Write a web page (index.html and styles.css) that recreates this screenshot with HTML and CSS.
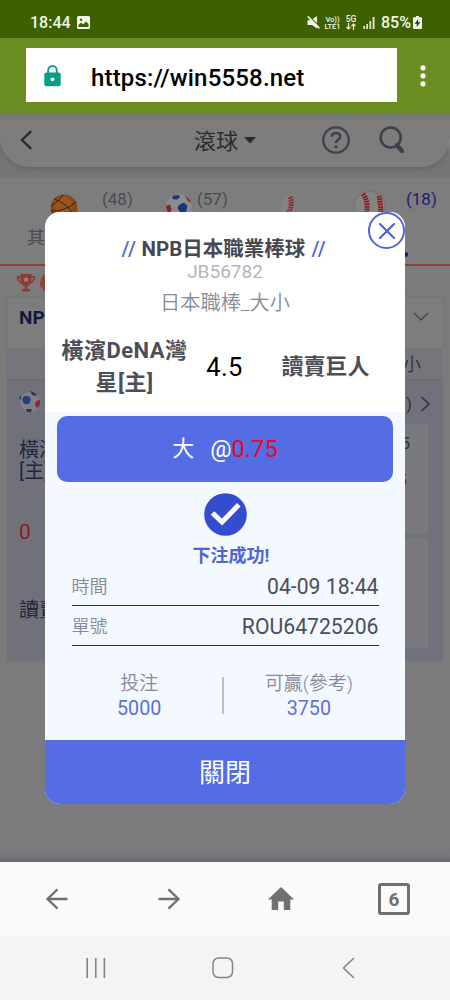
FILE: index.html
```html
<!DOCTYPE html>
<html lang="zh-Hant">
<head>
<meta charset="utf-8">
<title>滾球</title>
<link rel="stylesheet" href="styles.css">
</head>
<body>
<div class="phone">
  <header class="status">
    <span class="clock">18:44</span>
    <svg class="photo" width="13" height="13" viewBox="0 0 13 13"><rect width="13" height="13" rx="1.5" fill="#f2f5e6"/><path d="M1.5 11 V9 L4 6.5 L6 8.5 L9 5.5 L11.5 8 V11Z" fill="#3d6100"/><circle cx="4" cy="3.8" r="1.2" fill="#3d6100"/></svg>
    <span class="grow"></span>
    <svg class="mute" width="13" height="13" viewBox="0 0 13 13"><path d="M.5 4.3H4L10 0V12.5L5 9H.5Z" fill="#f2f5e6"/><path d="M2 0L13 11" stroke="#3d6100" stroke-width="1.2"/><path d="M.8 .4L12.4 12.4" stroke="#f2f5e6" stroke-width="1.6"/></svg>
    <span class="tiny volte"><span>Vo))</span><span>LTE1</span></span>
    <span class="tiny fiveg"><span>5G</span><svg width="10" height="7" viewBox="0 0 10 7"><path d="M2.5 0V6M.5 4L2.5 6L4.5 4M7.5 7V1M5.5 3L7.5 1L9.5 3" fill="none" stroke="#f2f5e6" stroke-width="1.2"/></svg></span>
    <svg class="signal" width="12" height="12" viewBox="0 0 12 12"><path d="M.3 9H2V12H.3ZM3.3 7H5V12H3.3ZM6.4 4H8.1V12H6.4ZM9.6 0H11.5V12H9.6Z" fill="#dfe6cf"/></svg>
    <span class="battery-text">85%</span>
    <svg class="battery" width="9" height="13" viewBox="0 0 9 13"><path d="M3 0H6V1.3H8Q9 1.3 9 2.3V12Q9 13 8 13H1Q0 13 0 12V2.3Q0 1.3 1 1.3H3Z" fill="#f2f5e6"/><path d="M5.3 3L1.6 7.7H4L3.4 11L7.4 6.2H5Z" fill="#213600"/></svg>
  </header>

  <div class="toolbar">
    <div class="address">
      <svg class="lock" width="17" height="22" viewBox="0 0 17 22"><path d="M4.2 9V5.3A4.2 4.2 0 0 1 12.8 5.3V9" fill="none" stroke="#0b9c86" stroke-width="1.9"/><rect x=".3" y="7.5" width="16.4" height="13.7" rx="2" fill="#0b9c86"/><circle cx="8.5" cy="14.3" r="1.9" fill="#fff"/></svg>
      <span class="url">https://win5558.net</span>
    </div>
    <svg class="dots" width="6" height="22" viewBox="0 0 6 22"><g fill="#fff"><circle cx="3" cy="2.8" r="2.6"/><circle cx="3" cy="10.8" r="2.6"/><circle cx="3" cy="18.8" r="2.6"/></g></svg>
  </div>

  <main class="page">
    <div class="app-head-wrap">
      <div class="app-head">
        <svg class="back" width="13" height="20" viewBox="0 0 13 20"><path d="M11.2 1.2L2 10L11.2 18.8" fill="none" stroke="#2b2b2d" stroke-width="2.3"/></svg>
        <span class="app-title">滾球</span>
        <svg class="caret" width="12" height="7" viewBox="0 0 12 7"><path d="M0 0H12L6 6.6Z" fill="#2b2b2d"/></svg>
        <svg class="help" width="28" height="28" viewBox="0 0 28 28"><circle cx="14" cy="14" r="12.7" fill="none" stroke="#3b404b" stroke-width="2.2"/><path d="M9.7 10.8Q9.9 7 14 7T18.2 10.5Q18.2 12.3 16 13.8T14 16.8V17.3" fill="none" stroke="#3b404b" stroke-width="2.4"/><circle cx="14" cy="20.9" r="1.6" fill="#3b404b"/></svg>
        <svg class="search" width="26" height="28" viewBox="0 0 26 28"><circle cx="11.7" cy="11.5" r="10" fill="none" stroke="#3b404b" stroke-width="2.6"/><path d="M17.8 19L23 25" stroke="#3b404b" stroke-width="4.2" stroke-linecap="round"/></svg>
      </div>
    </div>

    <nav class="sports">
      <div class="sport-row">
        <svg class="ball basket" width="28" height="28" viewBox="0 0 28 28"><circle cx="14" cy="14" r="13.5" fill="#8a4816"/><circle cx="13" cy="11" r="9" fill="#9a5420"/><path d="M1 17Q14 18 26 8M4 5Q18 9 24 23M13 1Q9 8 1 12" fill="none" stroke="#36200f" stroke-width="1"/></svg>
        <span class="count n48">(48)</span>
        <svg class="ball soccer" width="26" height="26" viewBox="0 0 26 26"><circle cx="13" cy="13" r="12.8" fill="#8a8c90"/><path d="M7 1.8L13 1L14 3L11 5.5L6 5ZM13 11L18 8.5L21.5 12L20 18L14 18L11.5 14Z" fill="#1c3575"/><path d="M0 12L4 10.5L5.5 15L4 20L1 17ZM19 2Q24 5 25 9L22 7Z" fill="#8c2028"/></svg>
        <span class="count n57">(57)</span>
        <svg class="ball half" width="20" height="28" viewBox="0 0 20 28"><path d="M19 0Q1 1 0 14Q1 24 8 28Q18 17 12 2Z" fill="#838383"/><path d="M10 3Q14 11 6 24" fill="none" stroke="#8e2831" stroke-width="5" stroke-dasharray="1.6 .9"/></svg>
        <svg class="ball baseball" width="33" height="33" viewBox="0 0 33 33"><circle cx="16.5" cy="16" r="15.7" fill="#848482" stroke="#727272"/><path d="M10 3Q17 12 12 28M26 5Q28 14 28 27" fill="none" stroke="#8b1521" stroke-width="5" stroke-dasharray="1.7 .9"/></svg>
        <span class="count n18">(18)</span>
      </div>
      <div class="other-row"><span>其他</span><i></i></div>
    </nav>

    <div class="promo">
      <svg width="20" height="18" viewBox="0 0 20 18"><path d="M4.5 0H15.5V2H19Q19.5 8 14 10Q13 12 11.3 12.5V15H14V17.5H6V15H8.7V12.5Q7 12 6 10Q.5 8 1 2H4.5Z" fill="#8c3a36"/><path d="M2.6 3.7H4.5L5 7.5Q2.8 6.4 2.6 3.7ZM17.4 3.7H15.5L15 7.5Q17.2 6.4 17.4 3.7Z" fill="#7d7d7d"/><path d="M10 2.2L10.9 4.5H13.2L11.4 6L12.1 8.4L10 7L7.9 8.4L8.6 6L6.8 4.5H9.1Z" fill="#a1867f"/></svg>
      <i></i>
    </div>

    <section class="league">
      <div class="league-head"><b>NPB</b><svg width="16" height="10" viewBox="0 0 16 10"><path d="M1 1L8 8L15 1" fill="none" stroke="#484848" stroke-width="1.5"/></svg></div>
      <div class="market-head">大小</div>
      <div class="match">
        <div class="match-teams">
          <svg width="22" height="22" viewBox="0 0 22 22"><circle cx="11" cy="11" r="10" fill="#808087"/><circle cx="7.5" cy="9" r="4.2" fill="#263e80"/><path d="M11 0L16 2L18 5L13 4ZM7 18L13 18L12 21H8ZM0 7L2 4L2 9Z" fill="#30354b"/><path d="M17 10L21 9L21 14L18 17L16 14Z" fill="#94242d"/></svg>
          <span class="home"><span>橫濱</span><span>[主]</span></span>
          <span class="score">0</span>
          <span class="away">讀賣</span>
        </div>
        <div class="match-odds">
          <div class="more"><span>)</span><svg width="11" height="18" viewBox="0 0 11 18"><path d="M1.5 2L9 9L1.5 16" fill="none" stroke="#333338" stroke-width="1.6"/></svg></div>
          <div class="cell"><span>4.5</span><span class="odd">0.75</span></div>
          <div class="cell"></div>
        </div>
      </div>
    </section>

    <section class="dialog">
      <div class="dialog-top">
        <button class="close"><svg width="18" height="18" viewBox="0 0 18 18"><path d="M2 2L16 16M16 2L2 16" stroke="#4a60d4" stroke-width="2.1" stroke-linecap="round"/></svg></button>
        <h1><i>//</i><span>NPB日本職業棒球</span><i>//</i></h1>
        <div class="code">JB56782</div>
        <div class="market">日本職棒_大小</div>
        <div class="versus"><b>橫濱DeNA灣<br>星[主]</b><span>4.5</span><b>讀賣巨人</b></div>
      </div>
      <div class="dialog-body">
        <div class="pick"><span class="side">大</span><span>@</span><span class="price">0.75</span></div>
        <svg class="check" width="43" height="43" viewBox="0 0 43 43"><circle cx="21.5" cy="21.5" r="21.3" fill="#344dce"/><path d="M8.5 20L18 29L34.8 11.8" fill="none" stroke="#fff" stroke-width="5"/></svg>
        <div class="success">下注成功!</div>
        <div class="row"><span>時間</span><em>04-09 18:44</em></div>
        <div class="row"><span>單號</span><em>ROU64725206</em></div>
        <div class="stats">
          <div class="stake"><span>投注</span><em>5000</em></div>
          <i></i>
          <div class="win"><span>可贏(參考)</span><em>3750</em></div>
        </div>
      </div>
      <button class="dismiss">關閉</button>
    </section>
  </main>

  <nav class="browser-nav">
    <svg width="24" height="24" viewBox="0 0 24 24"><path d="M22.5 12H2M12.5 2.3L2.5 12L12.5 21.7" fill="none" stroke="#707070" stroke-width="2.3"/></svg>
    <svg width="24" height="24" viewBox="0 0 24 24"><path d="M1.5 12H22M11.5 2.3L21.5 12L11.5 21.7" fill="none" stroke="#707070" stroke-width="2.3"/></svg>
    <svg width="26" height="24" viewBox="0 0 26 24"><path d="M13 0L26 12.4H22.3V23H15.8V14.5H10.2V23H3.7V12.4H0Z" fill="#707070"/></svg>
    <span class="tabs">6</span>
  </nav>
  <nav class="system-nav">
    <svg width="20" height="22" viewBox="0 0 20 22"><path d="M1.2 1V21M9.8 1V21M18.4 1V21" stroke="#848484" stroke-width="1.6"/></svg>
    <svg width="22" height="22" viewBox="0 0 22 22"><rect x="1" y="1" width="19.5" height="19.5" rx="5.5" fill="none" stroke="#848484" stroke-width="1.5"/></svg>
    <svg width="13" height="22" viewBox="0 0 13 22"><path d="M12 1L1.5 11L12 21" fill="none" stroke="#848484" stroke-width="1.6"/></svg>
  </nav>
</div>
</body>
</html>
```

FILE: styles.css
```css
* { box-sizing: border-box; }
body { margin: 0; font-family: Roboto, "Noto Sans CJK TC", sans-serif; }
svg { display: block; flex: none; }
i, em { font-style: normal; }
button { border: 0; padding: 0; font: inherit; }
.phone { width: 450px; height: 1000px; display: flex; flex-direction: column; overflow: hidden; }

.status { height: 38px; background: #3d6100; color: #f2f5e6; display: flex; align-items: center; padding: 7px 28px 0 30px; font-size: 16px; font-weight: 500; line-height: 18px; }
.clock { width: 40px; padding-top: 1px; }
.photo { margin-left: 7px; }
.grow { flex: 1; }
.tiny { display: flex; flex-direction: column; align-items: center; font-size: 7.5px; line-height: 7px; }
.volte { width: 17px; margin-left: 4px; }
.fiveg { width: 12px; margin-left: 4px; font-size: 8.5px; }
.signal { margin-left: 6px; }
.battery-text { margin-left: 6px; width: 30px; padding-top: 1px; }
.battery { margin-left: 2px; }

.toolbar { height: 75px; background: #6b8e23; display: flex; padding: 10px 24px 0 26px; justify-content: space-between; }
.address { width: 371px; height: 54px; background: #fff; display: flex; align-items: center; padding-left: 18px; }
.url { margin-left: 30px; padding-top: 6px; font-size: 24px; font-weight: 500; color: #000; letter-spacing: .17px; }
.lock { margin-top: 1px; }
.dots { margin-top: 17px; }

.page { position: relative; height: 749px; background: linear-gradient(#7b7b7b 741px, #656572 749px); overflow: hidden; }
.app-head-wrap { height: 65px; background: radial-gradient(5px 20px at 450px 20px, #d0d0d0, #757575); }
.app-head { height: 54px; background: linear-gradient(#747474, #7d7d7d 8px); border-radius: 0 0 30px 30px; box-shadow: 0 2px 4px #666; display: flex; align-items: center; padding-left: 20px; }
.app-title { margin-left: 161px; padding-top: 3px; font-size: 22px; line-height: 30px; color: #2b2b2d; }
.caret { margin-left: 6px; }
.help { margin-left: 66px; }
.search { margin-left: 29px; }

.sports { height: 88px; background: #7d7d7d; border-bottom: 2px solid #903d3a; }
.sport-row { height: 45px; display: flex; align-items: flex-start; padding-left: 50px; }
.count { margin-top: 11px; font-size: 17px; line-height: 20px; color: #4a4b54; }
.ball { margin-top: 16px; }
.n48 { margin-left: 24px; width: 33px; }
.soccer { margin-left: 31px; }
.n57 { margin-left: 5px; width: 33px; }
.half { margin-left: 50px; }
.baseball { margin-left: 53px; margin-top: 13px; }
.n18 { margin-left: 20px; color: #1b1c75; }
.other-row { display: flex; justify-content: space-between; padding: 0 42px 0 27px; font-size: 18px; line-height: 29px; color: #4a4b54; }
.other-row i { width: 5px; height: 5px; border-radius: 50%; background: #171b85; margin-top: 29px; }
.promo { height: 30px; display: flex; align-items: center; padding: 3px 0 0 16px; }
.promo i { width: 20px; height: 20px; margin-left: 4px; border-radius: 50%; background: #91443a; }

.league { width: 436px; margin: 2px 0 0 7px; }
.league-head { height: 50px; background: #7d7d7d; box-shadow: 0 0 2px #666; display: flex; justify-content: space-between; padding: 7px 14px 0 12px; font-size: 19px; line-height: 25px; color: #151a3c; }
.league-head b { font-weight: 700; }
.league-head svg { margin-top: 7px; }
.market-head { height: 32px; background: #75767c; border-bottom: 1px solid #6a6a70; padding-right: 22px; text-align: right; font-size: 18px; line-height: 34px; color: #33343b; }
.match { height: 281px; background: #70717b; display: flex; justify-content: space-between; }
.match-teams { padding: 11px 0 0 12px; display: flex; flex-direction: column; font-size: 20px; color: #24263c; }
.home { display: flex; flex-direction: column; line-height: 21px; margin-top: 27px; }
.score { margin-top: 38px; font-size: 21px; line-height: 24px; color: #941421; }
.away { margin-top: 53px; line-height: 26px; }
.match-odds { width: 60px; padding-right: 15px; display: flex; flex-direction: column; }
.more { height: 44px; margin-right: -3px; display: flex; align-items: center; justify-content: flex-end; gap: 8px; padding-top: 4px; color: #333338; font-size: 17px; }
.cell { height: 110px; margin-bottom: 4px; background: #7a7a7e; padding: 8px 18px 0 0; display: flex; flex-direction: column; text-align: right; font-size: 17px; line-height: 22px; color: #303036; }
.odd { margin-top: 15px; margin-right: 3px; margin-left: -20px; color: #9b1722; }

.dialog { position: absolute; left: 45px; top: 99px; width: 360px; height: 592px; border-radius: 15px; background: #f4f8ff; display: flex; flex-direction: column; overflow: hidden; text-align: center; }
.dialog-top { position: relative; height: 200px; background: #fff; padding-top: 24px; }
.close { position: absolute; right: 0; top: 0; width: 37px; height: 37px; border: 2px solid #4f66dc; border-radius: 50%; background: #fff; display: flex; align-items: center; justify-content: center; }
h1 { margin: 0; padding-right: 3px; display: flex; justify-content: center; gap: 6px; font-size: 20.5px; line-height: 26px; font-weight: 700; color: #454751; }
h1 i { width: 14px; color: #4f66dc; font-weight: 500; letter-spacing: .8px; }
.code { font-size: 19px; line-height: 20px; color: #b2b4be; }
.market { margin-top: 8px; font-size: 20.2px; line-height: 26px; color: #858998; font-weight: 350; }
.versus { height: 64px; margin-top: 19px; display: grid; grid-template-columns: 127px 73px 129px; padding-left: 16px; align-items: center; font-size: 22px; line-height: 32px; color: #4c4e58; white-space: nowrap; letter-spacing: .45px; }
.versus b:last-child { letter-spacing: 0; }
.versus span { color: #000; font-size: 25.5px; }
.dialog-body { height: 328px; display: flex; flex-direction: column; padding: 4px 12px 0; }
.pick { height: 66px; border-radius: 10px; background: #546de5; color: #fff; display: flex; align-items: center; justify-content: center; font-size: 23.7px; line-height: 30px; padding-bottom: 1px; }
.side { margin-right: 16px; font-size: 22px; }
.price { color: #e90824; }
.check { align-self: center; margin-top: 11px; }
.success { margin: 8px 0 0 12px; font-size: 18px; line-height: 24px; font-weight: 700; color: #5065d4; }
.row { height: 40px; margin: 0 14.5px; border-bottom: 1.5px solid #30323a; display: flex; justify-content: space-between; align-items: center; font-size: 18px; line-height: 28px; color: #858998; font-weight: 350; padding-top: 3px; }
.success + .row { margin-top: -2px; }
.row em { font-size: 21.2px; font-weight: 400; color: #4c4e58; }
.stats { display: flex; margin-top: 25px; padding: 0 40px 0 60px; justify-content: space-between; }
.stats i { width: 1.5px; height: 37px; margin: 6px 0 0 20px; background: #b7bfd0; }
.stats div { display: flex; flex-direction: column; align-items: center; font-size: 19px; line-height: 25px; color: #858998; font-weight: 350; }
.stats em { font-size: 19.7px; font-weight: 400; color: #5b70dc; }
.dismiss { flex: 1; background: #546de5; color: #fff; font-size: 26px; line-height: 36px; padding-top: 1px; }

.browser-nav { height: 74px; background: #fafafa; display: flex; align-items: center; padding: 0 40px 0 45px; }
.browser-nav svg + svg { margin-left: 88px; }
.browser-nav svg:nth-child(3) { margin-left: 87px; }
.tabs { margin-left: auto; width: 32px; height: 32px; border: 3px solid #707070; border-radius: 3px; text-align: center; font-size: 19px; line-height: 27px; font-weight: 700; color: #707070; }
.system-nav { height: 64px; background: #f4f4f4; display: flex; align-items: center; padding: 0 95px 0 86px; }
.system-nav svg:nth-child(2) { margin-left: 106px; }
.system-nav svg:nth-child(3) { margin-left: auto; }
```
